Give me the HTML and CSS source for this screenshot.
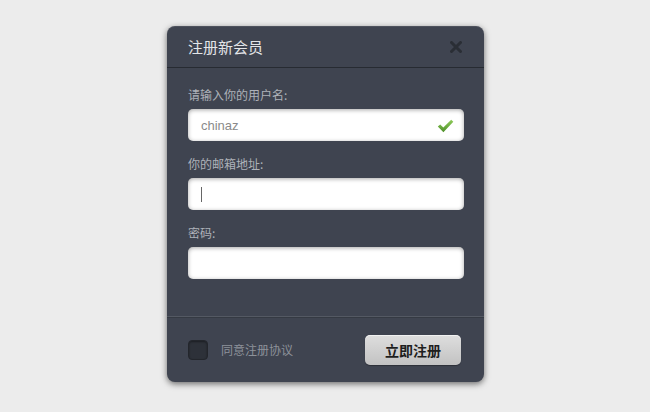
FILE: index.html
```html
<!DOCTYPE html>
<html lang="zh-CN">
<head>
<meta charset="utf-8">
<title>注册新会员</title>
<link rel="stylesheet" href="styles.css">
</head>
<body>
<div class="dialog">
  <div class="dialog-header">
    <span class="title">注册新会员</span>
    <svg class="close" width="12" height="12" viewBox="0 0 12 12"><path d="M1.5 1.5 L10.5 10.5 M10.5 1.5 L1.5 10.5" stroke="#2a2e35" stroke-width="3" stroke-linecap="round"/></svg>
  </div>
  <div class="dialog-body">
    <div class="field">
      <div class="label">请输入你的用户名:</div>
      <div class="input"><span class="value">chinaz</span>
        <svg class="check" width="17" height="14" viewBox="0 0 17 14">
          <defs><linearGradient id="g" x1="0" y1="0" x2="0" y2="1"><stop offset="0" stop-color="#8fcb5a"/><stop offset="1" stop-color="#4e8f2a"/></linearGradient></defs>
          <path d="M0.8 7.6 L3.2 5.6 L6.3 8.6 L14.2 0.8 L16.3 2.8 L6.4 13.2 Z" fill="url(#g)"/>
        </svg>
      </div>
    </div>
    <div class="field">
      <div class="label">你的邮箱地址:</div>
      <div class="input"><span class="caret"></span></div>
    </div>
    <div class="field">
      <div class="label">密码:</div>
      <div class="input"></div>
    </div>
  </div>
  <div class="dialog-footer">
    <div class="agree"><span class="checkbox"></span><span class="agree-text">同意注册协议</span></div>
    <button class="submit">立即注册</button>
  </div>
</div>
</body>
</html>
```

FILE: styles.css
```css
* { box-sizing: border-box; }
html, body { margin: 0; padding: 0; }
body {
  background: #ececec;
  font-family: "Noto Sans CJK SC", "Liberation Sans", sans-serif;
  width: 650px;
  height: 412px;
  overflow: hidden;
}
.dialog {
  margin: 26px 0 0 167px;
  width: 317px;
  height: 356px;
  background: #3f4450;
  border-radius: 8px;
  box-shadow: 0 2px 6px rgba(0,0,0,0.55), inset 0 1px 0 rgba(255,255,255,0.08);
  display: flex;
  flex-direction: column;
}
.dialog-header {
  height: 42px;
  padding: 0 22px 0 21px;
  display: flex;
  align-items: center;
  justify-content: space-between;
  border-bottom: 1px solid #272b32;
}
.title {
  color: #e3e5e8;
  font-size: 15px;
  line-height: 20px;
}
.close { display: block; }
.dialog-body {
  padding: 19px 21px 0 21px;
  height: 249px;
  border-bottom: 1px solid #545963;
  box-shadow: 0 1px 0 #353a43;
}
.field + .field { margin-top: 15px; }
.label {
  color: #aeb2b9;
  font-size: 12px;
  line-height: 16px;
  margin-bottom: 6px;
}
.input {
  position: relative;
  height: 32px;
  width: 276px;
  background: #fff;
  border-radius: 5px;
  box-shadow: inset 0 1px 4px rgba(0,0,0,0.35);
  padding-left: 13px;
  display: flex;
  align-items: center;
}
.value {
  font-family: "Liberation Sans", Arial, sans-serif;
  font-size: 13px;
  color: #8a8a8a;
}
.check {
  position: absolute;
  right: 10px;
  top: 10px;
}
.caret {
  display: block;
  width: 1px;
  height: 15px;
  background: #666;
}
.dialog-footer {
  flex: 1;
  padding: 0 23px 0 21px;
  display: flex;
  align-items: center;
  justify-content: space-between;
}
.agree { display: flex; align-items: center; }
.checkbox {
  width: 20px;
  height: 20px;
  border-radius: 4px;
  background: #2d3139;
  border: 1px solid #23262c;
  box-shadow: inset 0 1px 2px rgba(0,0,0,0.4);
  margin-right: 13px;
}
.agree-text {
  color: #8d929a;
  font-size: 12px;
}
.submit {
  width: 96px;
  height: 30px;
  border: 0;
  border-radius: 5px;
  background: linear-gradient(#dedede, #c2c2c2);
  box-shadow: 0 1px 1px rgba(0,0,0,0.3), inset 0 1px 0 rgba(255,255,255,0.6);
  color: #1e1e1e;
  font-family: "Noto Sans CJK SC", sans-serif;
  font-weight: 700;
  font-size: 14px;
  padding: 0;
}
```
